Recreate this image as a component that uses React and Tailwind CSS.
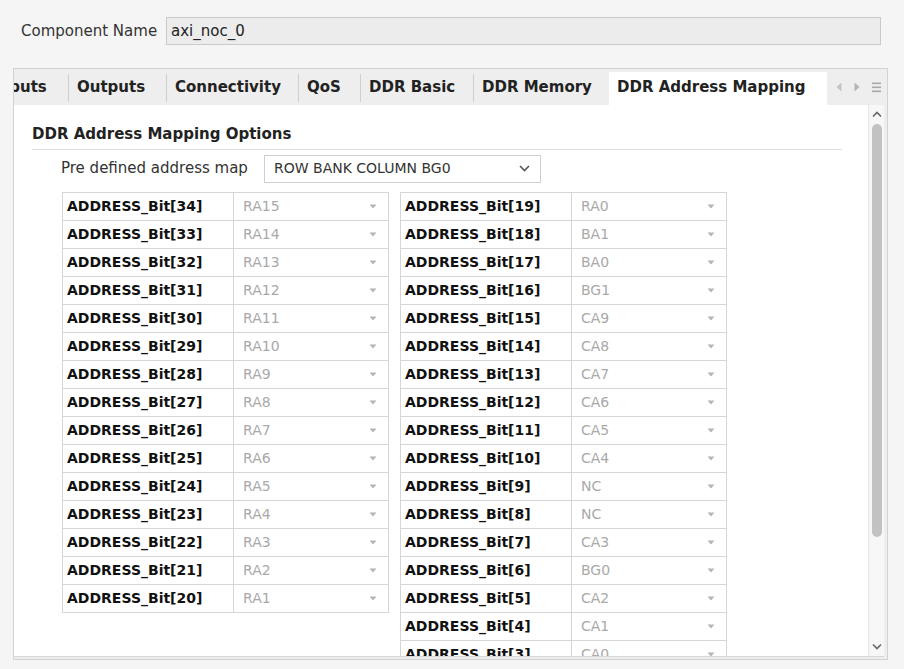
import React from "react";

const left = [
  [34, "RA15"], [33, "RA14"], [32, "RA13"], [31, "RA12"], [30, "RA11"],
  [29, "RA10"], [28, "RA9"], [27, "RA8"], [26, "RA7"], [25, "RA6"],
  [24, "RA5"], [23, "RA4"], [22, "RA3"], [21, "RA2"], [20, "RA1"],
];

const right = [
  [19, "RA0"], [18, "BA1"], [17, "BA0"], [16, "BG1"], [15, "CA9"],
  [14, "CA8"], [13, "CA7"], [12, "CA6"], [11, "CA5"], [10, "CA4"],
  [9, "NC"], [8, "NC"], [7, "CA3"], [6, "BG0"], [5, "CA2"],
  [4, "CA1"], [3, "CA0"], [2, "BA1"], [1, "BA0"],
];

const tabs = [
  { label: "Outputs", w: "w-[98px]" },
  { label: "Connectivity", w: "w-[132px]" },
  { label: "QoS", w: "w-[62px]" },
  { label: "DDR Basic", w: "w-[113px]" },
  { label: "DDR Memory", w: "w-[136px]" },
];

function Caret() {
  return (
    <svg width="8" height="5" viewBox="0 0 8 5" className="shrink-0">
      <path d="M0.5 0.5 L7.5 0.5 L4 4.5 Z" fill="#b4b4b4" />
    </svg>
  );
}

function Row({ bit, value }) {
  return (
    <div className="flex h-[28px] border-b border-[#d6d6d6]">
      <div className="w-[171px] border-r border-[#d6d6d6] flex items-center pl-[4px] text-[14px] font-bold text-[#111]">
        ADDRESS_Bit[{bit}]
      </div>
      <div className="flex-1 flex items-center justify-between pl-[9px] pr-[11px] text-[14px] text-[#a9a9a9]">
        <span>{value}</span>
        <Caret />
      </div>
    </div>
  );
}

function Table({ rows }) {
  return (
    <div className="w-[327px] border-t border-x border-[#d6d6d6] bg-white self-start">
      {rows.map(([bit, value]) => (
        <Row key={bit} bit={bit} value={value} />
      ))}
    </div>
  );
}

export default function App() {
  return (
    <div className="w-[904px] h-[669px] bg-[#f5f5f5] overflow-hidden font-['DejaVu_Sans',sans-serif] text-[#222]">

      {/* Component name */}
      <div className="flex items-center pt-[17px] pl-[21px]">
        <span className="text-[15px] w-[145px] text-[#333]">Component Name</span>
        <div className="w-[715px] h-[28px] bg-[#ececec] border border-[#cacaca] flex items-center pl-[4px] text-[15px] text-[#222]">
          axi_noc_0
        </div>
      </div>

      {/* Tab widget */}
      <div className="ml-[13px] mt-[23px] w-[875px] h-[592px] border border-[#d2d2d2] bg-[#eeeeee] flex flex-col">

        {/* Tab bar */}
        <div className="h-[36px] pt-[3px] flex text-[15px] font-bold text-[#222]">
          <div className="w-[54px] flex items-center pt-[1px] pb-[3px] overflow-hidden">
            <span className="-ml-[21px]">Inputs</span>
          </div>
          {tabs.map((t) => (
            <div key={t.label} className={`${t.w} flex items-center pt-[1px] pb-[3px]`}>
              <div className="w-px h-[28px] bg-[#cfcfcf]" />
              <span className="pl-[8px] whitespace-nowrap">{t.label}</span>
            </div>
          ))}
          <div className="w-[218px] bg-white flex items-center pl-[8px] pt-[1px] pb-[3px] whitespace-nowrap">
            DDR Address Mapping
          </div>
          <div className="flex-1 flex items-center pb-[3px] pl-[9px] gap-[12px]">
            <svg width="6" height="10" viewBox="0 0 6 10">
              <path d="M5.5 0.5 L0.5 5 L5.5 9.5 Z" fill="#c4c4c4" />
            </svg>
            <svg width="6" height="10" viewBox="0 0 6 10">
              <path d="M0.5 0.5 L5.5 5 L0.5 9.5 Z" fill="#b4b4b4" />
            </svg>
            <svg width="9" height="11" viewBox="0 0 9 11">
              <rect x="0" y="0.5" width="9" height="1.6" fill="#a8a8a8" />
              <rect x="0" y="4.5" width="9" height="1.6" fill="#a8a8a8" />
              <rect x="0" y="8.5" width="9" height="1.6" fill="#a8a8a8" />
            </svg>
          </div>
        </div>

        {/* Page */}
        <div className="flex h-[552px] mr-[3px] border-b border-[#d8d8d8]">
          <div className="flex-1 bg-white overflow-hidden">
            <div className="pl-[18px] pr-[26px] pt-[18px]">
              <div className="text-[15px] font-bold text-[#222] pb-[3px] border-b border-[#dddddd]">
                DDR Address Mapping Options
              </div>
            </div>

            <div className="flex items-center pl-[47px] mt-[5px]">
              <span className="text-[15px] text-[#333] w-[203px]">Pre defined address map</span>
              <div className="w-[277px] h-[28px] border border-[#cfcfcf] flex items-center justify-between pl-[9px] pr-[10px] text-[14px] text-[#333]">
                <span>ROW BANK COLUMN BG0</span>
                <svg width="11" height="7" viewBox="0 0 11 7">
                  <path d="M1 1 L5.5 5.5 L10 1" stroke="#555" strokeWidth="1.6" fill="none" />
                </svg>
              </div>
            </div>

            <div className="flex gap-[11px] pl-[48px] mt-[9px]">
              <Table rows={left} />
              <Table rows={right} />
            </div>
          </div>

          {/* Scrollbar */}
          <div className="w-[16px] bg-[#f7f7f7] border-l border-[#e6e6e6] flex flex-col items-center">
            <svg width="10" height="7" viewBox="0 0 10 7" className="mt-[6px]">
              <path d="M1 5.5 L5 1.5 L9 5.5" stroke="#666" strokeWidth="1.6" fill="none" />
            </svg>
            <div className="w-[10px] h-[413px] mt-[6px] rounded-full bg-[#c2c2c2]" />
            <div className="flex-1" />
            <svg width="10" height="7" viewBox="0 0 10 7" className="mb-[6px]">
              <path d="M1 1.5 L5 5.5 L9 1.5" stroke="#666" strokeWidth="1.6" fill="none" />
            </svg>
          </div>
        </div>
      </div>
    </div>
  );
}
